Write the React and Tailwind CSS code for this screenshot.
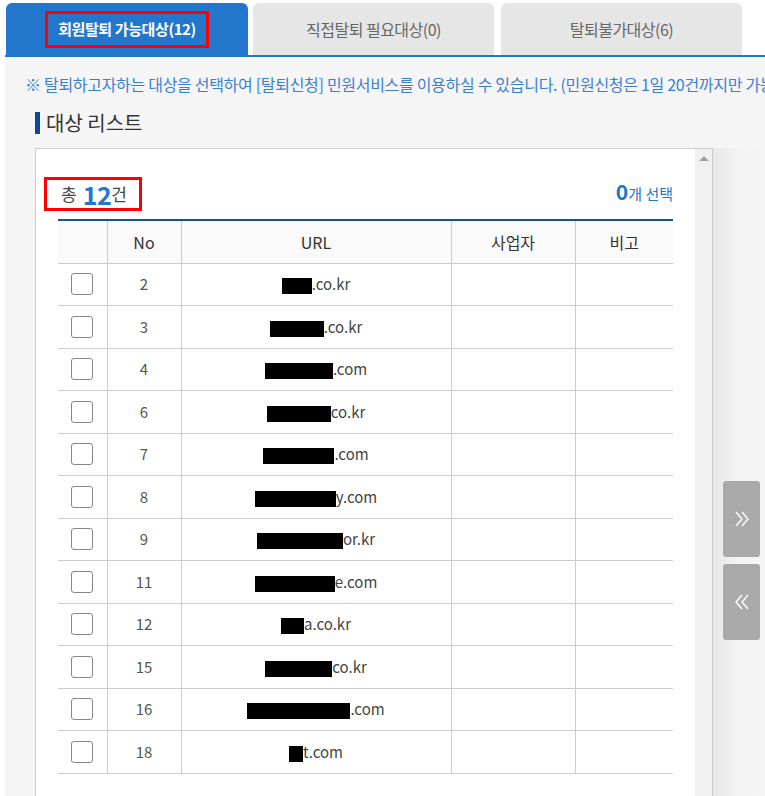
import React from 'react';

const rows = [
  { no: 2, black: 30, tail: '.co.kr' },
  { no: 3, black: 54, tail: '.co.kr' },
  { no: 4, black: 68, tail: '.com' },
  { no: 6, black: 64, tail: 'co.kr' },
  { no: 7, black: 71, tail: '.com' },
  { no: 8, black: 81, tail: 'y.com' },
  { no: 9, black: 86, tail: 'or.kr' },
  { no: 11, black: 80, tail: 'e.com' },
  { no: 12, black: 23, tail: 'a.co.kr' },
  { no: 15, black: 67, tail: 'co.kr' },
  { no: 16, black: 103, tail: '.com' },
  { no: 18, black: 14, tail: 't.com' },
];

function Chevrons({ dir }) {
  // double chevron, white strokes
  const d = dir === 'right'
    ? 'M3 3 L9 10 L3 17 M9 3 L15 10 L9 17'
    : 'M9 3 L3 10 L9 17 M15 3 L9 10 L15 17';
  return (
    <svg width="18" height="20" viewBox="0 0 18 20" fill="none">
      <path d={d} stroke="white" strokeWidth="1.4" strokeLinejoin="miter" />
    </svg>
  );
}

export default function App() {
  return (
    <div className="w-[765px] h-[796px] overflow-hidden bg-white font-['Noto_Sans_CJK_KR','Noto_Sans',sans-serif]">
      {/* Tabs */}
      <div className="flex items-end h-[55px] pl-[6px]">
        <div className="w-[242px] h-[52px] rounded-t-[6px] bg-[#2277cc] flex items-center justify-center">
          <span className="border-[3px] border-[#ff0000] px-[10px] h-[37px] flex items-center text-white text-[15px] font-bold tracking-[-0.4px]">
            회원탈퇴 가능대상(12)
          </span>
        </div>
        <div className="ml-[5px] w-[241px] h-[52px] rounded-t-[6px] bg-[#e6e6e6] flex items-center justify-center text-[16px] text-[#666] tracking-[-0.5px]">
          직접탈퇴 필요대상(0)
        </div>
        <div className="ml-[7px] w-[241px] h-[52px] rounded-t-[6px] bg-[#e6e6e6] flex items-center justify-center text-[16px] text-[#666] tracking-[-0.5px]">
          탈퇴불가대상(6)
        </div>
      </div>
      <div className="ml-[5px] h-[2px] bg-[#2277cc]" />

      {/* Content */}
      <div className="ml-[5px] h-[739px] bg-[#f5f5f5] flex flex-col">
        <p className="pt-[16px] pl-[20px] h-[40px] whitespace-nowrap text-[16px] leading-[22px] text-[#3b7fd4] tracking-[-0.3px]">
          ※ 탈퇴하고자하는 대상을 선택하여 [탈퇴신청] 민원서비스를 이용하실 수 있습니다. (민원신청은 1일 20건까지만 가능합니다.)
        </p>
        <div className="flex items-center mt-[15px] pl-[30px] h-[22px]">
          <div className="w-[5px] h-[22px] bg-[#0d4a8c]" />
          <h2 className="ml-[6px] text-[20px] text-[#333] leading-[22px]">대상 리스트</h2>
        </div>

        <div className="flex flex-1 mt-[14px]">
          {/* White panel */}
          <div className="ml-[30px] w-[678px] bg-white border border-[#cccccc] border-b-0 flex">
            <div className="flex-1 px-[22px]">
              <div className="flex items-end justify-between h-[70px] pb-[8px]">
                <div className="-ml-[14px] border-[3px] border-[#ff0000] w-[98px] h-[34px] flex items-center pl-[14px]">
                  <span className="text-[17px] text-[#444]">총</span>
                  <span className="ml-[6px] text-[25px] font-bold text-[#2277cc] leading-none tracking-[-0.5px]">12</span>
                  <span className="text-[17px] text-[#444]">건</span>
                </div>
                <div className="flex items-baseline pb-[6px]">
                  <span className="text-[21px] font-bold text-[#2277cc] leading-none">0</span>
                  <span className="text-[15px] text-[#2277cc]">개 선택</span>
                </div>
              </div>
              <table className="w-[615px] border-collapse border-t-2 border-t-[#1a4f9c] table-fixed">
                <colgroup>
                  <col className="w-[49px]" />
                  <col className="w-[74px]" />
                  <col className="w-[270px]" />
                  <col className="w-[124px]" />
                  <col className="w-[98px]" />
                </colgroup>
                <thead>
                  <tr className="h-[43px] bg-[#fafafa] text-[16px] text-[#333] font-normal">
                    <th className="font-normal border-b border-[#cccccc]"></th>
                    <th className="font-normal border-b border-l border-[#cccccc]">No</th>
                    <th className="font-normal border-b border-l border-[#cccccc]">URL</th>
                    <th className="font-normal border-b border-l border-[#cccccc]">사업자</th>
                    <th className="font-normal border-b border-l border-[#cccccc]">비고</th>
                  </tr>
                </thead>
                <tbody>
                  {rows.map((r) => (
                    <tr key={r.no} className="h-[42.5px] text-[15px] text-[#444]">
                      <td className="border-b border-[#cccccc]">
                        <div className="mx-auto w-[22px] h-[22px] rounded-[3px] border border-[#888] bg-white" />
                      </td>
                      <td className="border-b border-l border-[#cccccc] text-center text-[#555]">{r.no}</td>
                      <td className="border-b border-l border-[#cccccc] text-center whitespace-nowrap">
                        <span className="inline-block align-[-4px] h-[16px] bg-black" style={{ width: r.black }} />
                        <span>{r.tail}</span>
                      </td>
                      <td className="border-b border-l border-[#cccccc]"></td>
                      <td className="border-b border-l border-[#cccccc]"></td>
                    </tr>
                  ))}
                </tbody>
              </table>
            </div>
            {/* scrollbar track */}
            <div className="w-[17px] bg-[#f1f1f1] flex justify-center pt-[7px]">
              <div className="w-0 h-0 border-l-[5px] border-r-[5px] border-b-[5px] border-l-transparent border-r-transparent border-b-[#a3a3a3]" />
            </div>
          </div>

          {/* side arrows */}
          <div className="flex-1 bg-gradient-to-r from-[#e8e8e8] via-[#f3f3f3] to-[#f5f5f5] flex flex-col pl-[10px] pt-[333px] gap-[7px]">
            <button className="w-[37px] h-[76px] rounded-[3px] bg-[#aaaaaa] flex items-center justify-center">
              <Chevrons dir="right" />
            </button>
            <button className="w-[37px] h-[76px] rounded-[3px] bg-[#aaaaaa] flex items-center justify-center">
              <Chevrons dir="left" />
            </button>
          </div>
        </div>
      </div>
    </div>
  );
}
